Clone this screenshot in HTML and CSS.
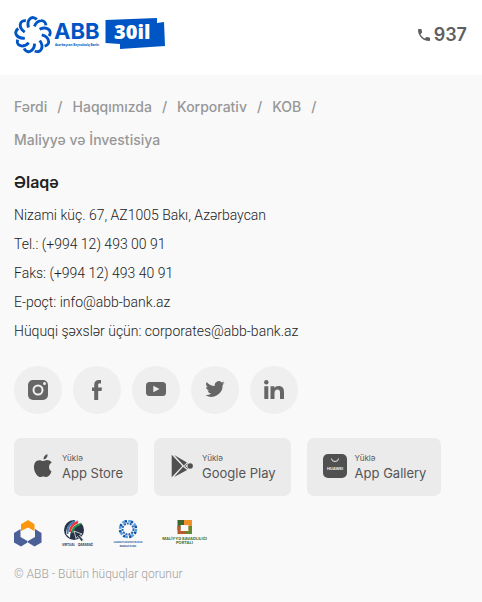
FILE: index.html
```html
<!DOCTYPE html>
<html lang="az">
<head>
<meta charset="utf-8">
<meta name="viewport" content="width=device-width, initial-scale=1">
<title>ABB</title>
<link rel="stylesheet" href="styles.css">
</head>
<body>
<header class="header">
  <a class="logo" href="#">
    <svg width="152" height="40" viewBox="14 15 152 40">
      <defs><path id="petal" d="M-4.500-7.500C-5.500-11-5.300-14-3-16.200C-1-18.200 1.800-17.600 3.800-15.600" fill="none" stroke="#0055c4" stroke-width="2.900"/></defs>
      <g transform="translate(33 35)">
        <use href="#petal"/>
        <use href="#petal" transform="rotate(40)"/>
        <use href="#petal" transform="rotate(80)"/>
        <use href="#petal" transform="rotate(120)"/>
        <use href="#petal" transform="rotate(160)"/>
        <use href="#petal" transform="rotate(200)"/>
        <use href="#petal" transform="rotate(240)"/>
        <use href="#petal" transform="rotate(280)"/>
        <use href="#petal" transform="rotate(320)"/>
      </g>
      <text class="logo-name" x="54" y="39">ABB</text>
      <text class="logo-sub" x="55" y="46">Azərbaycan Beynəlxalq Bankı</text>
      <path d="M105.500 20L157 18V23L164 22L165 46L120 49V44L105.500 43Z" fill="#0055c4"/>
      <text class="logo-years" x="114" y="39">30il</text>
    </svg>
  </a>
  <a class="phone" href="tel:937">
    <svg width="12" height="12" viewBox="3 3 18 18"><path fill="#5f5f5f" d="M6.600 10.800c1.400 2.800 3.800 5.100 6.600 6.600l2.200-2.200c.3-.3.700-.4 1-.2 1.100.4 2.300.6 3.600.6.600 0 1 .4 1 1V20c0 .6-.4 1-1 1C10.600 21 3 13.400 3 4c0-.6.400-1 1-1h3.500c.6 0 1 .4 1 1 0 1.200.2 2.400.6 3.600.1.400 0 .7-.2 1z"/></svg>
    <span>937</span>
  </a>
</header>
<main class="content">
  <nav>
    <ul class="links">
      <li><a href="#">Fərdi</a></li>
      <li><a href="#">Haqqımızda</a></li>
      <li><a href="#">Korporativ</a></li>
      <li><a href="#">KOB</a></li>
      <li><a href="#">Maliyyə və İnvestisiya</a></li>
    </ul>
  </nav>
  <section class="contact">
    <h2>Əlaqə</h2>
    <p>Nizami küç. 67, AZ1005 Bakı, Azərbaycan</p>
    <p>Tel.: (+994 12) 493 00 91</p>
    <p>Faks: (+994 12) 493 40 91</p>
    <p>E-poçt: info@abb-bank.az</p>
    <p>Hüquqi şəxslər üçün: corporates@abb-bank.az</p>
  </section>
  <div class="socials">
    <a href="#" aria-label="Instagram"><svg width="20" height="20" viewBox="0 0 20 20"><rect width="20" height="20" rx="5" fill="#666"/><circle cx="10" cy="10" r="4.500" fill="none" stroke="#efefef" stroke-width="2"/><circle cx="16.500" cy="3.600" r="1.500" fill="#efefef"/></svg></a>
    <a href="#" aria-label="Facebook"><svg width="20" height="20" viewBox="0 0 20 20"><path fill="#666" d="M7.200 20V11H5V7.500h2.200V5C7.200 1.800 9 0 12 0h2v3.500h-1.500c-1 0-1.300.5-1.300 1.400v2.600H15L14.500 11h-3.300v9z"/></svg></a>
    <a href="#" aria-label="YouTube"><svg class="raised" width="20" height="14" viewBox="0 0 20 14"><rect width="20" height="14" rx="3.500" fill="#666"/><path d="M7.300 3.800v6.400L13.500 7z" fill="#efefef"/></svg></a>
    <a href="#" aria-label="Twitter"><svg class="raised" width="20" height="16" viewBox="0 2 24 20"><path fill="#666" d="M24 4.600a10 10 0 0 1-2.800.8 5 5 0 0 0 2.100-2.700c-1 .5-2 1-3.100 1.200a4.900 4.900 0 0 0-8.400 4.500A14 14 0 0 1 1.700 3.100a4.900 4.900 0 0 0 1.500 6.600c-.8 0-1.500-.2-2.200-.6v.1a4.900 4.900 0 0 0 3.900 4.800c-.7.200-1.500.2-2.200.1a4.900 4.900 0 0 0 4.600 3.400A9.900 9.900 0 0 1 0 19.500a14 14 0 0 0 21.500-12.400A10 10 0 0 0 24 4.600z"/></svg></a>
    <a href="#" aria-label="LinkedIn"><svg width="20" height="20" viewBox="0 0 20 20"><circle cx="2.300" cy="2.300" r="2.200" fill="#666"/><path fill="#666" d="M.3 6.200h4V19h-4zM6.500 6.200h3.900V8c.8-1.300 2.100-2.100 4-2.100 4.200 0 5.600 2.200 5.600 6.300V19h-4v-6.300c0-1.900-.5-3.300-2.500-3.300-2 0-3 1.300-3 3.400V19h-4z"/></svg></a>
  </div>
  <div class="stores">
    <a class="store" href="#">
      <svg width="24" height="24" viewBox="0 0 24 24"><path fill="#505050" d="M21.500 17.500c-1.300 3.200-3.300 5.800-5.300 5.500-1.100-.1-1.600-.6-2.900-.6s-1.900.5-2.800.6c-2.300.3-4.600-2.700-5.700-5.500C3.300 13.500 3.800 8.500 7 6.800c1-.6 2.200-.8 3.300-.6 1.100.2 2 .8 3 .8s2.200-.9 3.800-.9c2 0 3.700 1 4.600 2.400-3.700 2-3.300 7-.2 9zM13.500 5.400c-.1-2.700 1.700-4.900 4-5.200.3 2.600-1.500 5-4 5.200z"/></svg>
      <span class="label"><small>Yüklə</small>App Store</span>
    </a>
    <a class="store" href="#">
      <svg width="24" height="24" viewBox="0 0 24 24"><path fill="#505050" d="M1.700.7L12.300 12 1.700 23.300zM4.200 1l12.700 7.600-3.200 2.800zM13.100 12.800l4 3.100L4.100 23zM17.500 9.400l.7.400-3 2.200 3 2.200-.7.500-3.300-2.700z"/><circle cx="20.200" cy="12" r="2.700" fill="#505050"/></svg>
      <span class="label"><small>Yüklə</small>Google Play</span>
    </a>
    <a class="store" href="#">
      <svg width="24" height="24" viewBox="0 0 24 24"><rect width="24" height="24" rx="5" fill="#505050"/><path d="M8.500 4.500a3.500 3 0 0 0 7 0" fill="none" stroke="#ebebeb"/><text class="huawei" x="12" y="15.500">HUAWEI</text></svg>
      <span class="label"><small>Yüklə</small>App Gallery</span>
    </a>
  </div>
  <div class="partners">
    <a href="#" aria-label="Partner"><svg width="28" height="28" viewBox="0 0 28 28"><path fill="#fb960d" d="M7 4.300L14 0l6.500 4.300V11L14 7.500 7 11z"/><path fill="#4c6098" d="M0 13l6.500-4v8l7 4v1.500L7 26.500l-7-4zM27.500 13L21 9v8l-7 4v1.500l6.500 4 7-4z"/></svg></a>
    <a href="#" aria-label="Virtual Qarabağ"><svg width="32" height="28" viewBox="0 0 32 28"><circle cx="12" cy="10" r="10" fill="#273448"/><path d="M4 14C4 7 8 2 14 0l6 3C13 5 8 9 8 18z" fill="#fff"/><path d="M5.500 14C5 7 9 3 13 1" fill="none" stroke="#3c7fb3" stroke-width="2"/><path d="M8 12c0-5 4-9 8-10" fill="none" stroke="#ef3340" stroke-width="2.500"/><path d="M10.500 13c0-5 4-8 8-9" fill="none" stroke="#289448" stroke-width="2"/><path d="M12 11l8 3-2.500 1.500 4 4.500-2 1.500-4-5-1.500 2z" fill="#273448" stroke="#fff" stroke-width=".7"/><text class="mark virtual" x="0" y="26">VIRTUAL</text><text class="mark karabakh" x="16" y="26">QARABAĞ</text></svg></a>
    <a href="#" aria-label="Mərkəzi Bank"><svg width="34" height="28" viewBox="0 0 34 28"><g fill="none" stroke="#2864ae"><circle cx="17" cy="9" r="5.500" stroke-width="2" stroke-dasharray="2 1"/><circle cx="17" cy="9" r="8" stroke="#55a5e2" stroke-width="2.500" stroke-dasharray="3.280 3"/><circle cx="17" cy="9" r="8" stroke="#164a9d" stroke-width="2.500" stroke-dasharray="2 4.280" stroke-dashoffset="-3"/></g><text class="mark bank" x="17" y="23">AZƏRBAYCAN RESPUBLİKASI</text><text class="mark bank" x="17" y="27">MƏRKƏZİ BANKI</text></svg></a>
    <a href="#" aria-label="Maliyyə Savadlılığı Portalı"><svg width="46" height="28" viewBox="0 0 46 28"><path fill="#3e652a" d="M15.500 0H22v5h-3.500v5h-3z"/><path fill="#f09128" d="M22 0h8v10h-3.500V5H22z"/><path fill="#b75a2c" d="M15.500 6h3v5H24v3h-8.500z"/><path fill="#66892f" d="M23 11h3.500V6H30v8h-7z"/><text class="mark portal" x="22.500" y="20">MALİYYƏ SAVADLILIĞI</text><text class="mark portal" x="22.500" y="24">PORTALI</text></svg></a>
  </div>
  <footer>© ABB - Bütün hüquqlar qorunur</footer>
</main>
</body>
</html>
```

FILE: styles.css
```css
* { box-sizing: border-box; }

body {
  margin: 0;
  background: #f9f9f9;
  color: #222;
  font: 300 14px/29px Roboto, "Liberation Sans", sans-serif;
}

a { color: inherit; text-decoration: none; }
svg { display: block; flex: none; }

.header {
  display: flex;
  align-items: center;
  justify-content: space-between;
  padding: 15px 15px 20px 14px;
  background: #fff;
}

.logo-name { font: 700 22px/22px Inter, sans-serif; fill: #0055c4; }
.logo-sub { font: 700 3px/3px "Open Sans", sans-serif; fill: #0055c4; }
.logo-years { font: 800 20px "Open Sans", sans-serif; fill: #fff; }

.phone {
  display: flex;
  align-items: center;
  gap: 4px;
  color: #5f5f5f;
  font: 600 18px/36px Inter, sans-serif;
}

.content { padding: 15px 14px; }

.links {
  display: flex;
  flex-wrap: wrap;
  margin: 0;
  padding: 0;
  list-style: none;
  color: #979797;
  font: 500 14px/33px Inter, sans-serif;
}
.links li:not(:last-child)::after { content: "/"; padding: 0 10px; }

.contact { padding-top: 10px; }
.contact h2 { margin: 0 0 3px; font: 600 16px/32px Inter, sans-serif; }
.contact p { margin: 0; }

.socials { display: flex; gap: 11px; padding-top: 20px; }
.socials a {
  display: flex;
  align-items: center;
  justify-content: center;
  width: 48px;
  height: 48px;
  border-radius: 50%;
  background: #efefef;
}
.raised { margin-bottom: 2px; }

.stores { display: flex; flex-wrap: wrap; gap: 16px; padding-top: 24px; }
.store {
  display: flex;
  align-items: center;
  gap: 8px;
  padding: 13px 15px 15px 16px;
  border-radius: 7px;
  background: #ebebeb;
  color: #555;
  font: 400 13px/16px Inter, sans-serif;
}
.label small { display: block; font-size: 8px; line-height: 14px; }
.huawei { font: 700 4px Inter, sans-serif; fill: #ebebeb; text-anchor: middle; }

.partners { display: flex; gap: 17px; padding: 24px 0 12px; }
.partners a:first-child { margin-right: 3px; }
.mark { font: 700 4px Inter, sans-serif; }
.virtual { font-size: 3px; fill: #273448; }
.karabakh { font-size: 3px; fill: #273448; }
.bank { font-size: 2px; fill: #235494; text-anchor: middle; }
.portal { font-size: 4px; fill: #3e702a; text-anchor: middle; }

footer { color: #a0a0a0; font-size: 12px; line-height: 29px; }
```
